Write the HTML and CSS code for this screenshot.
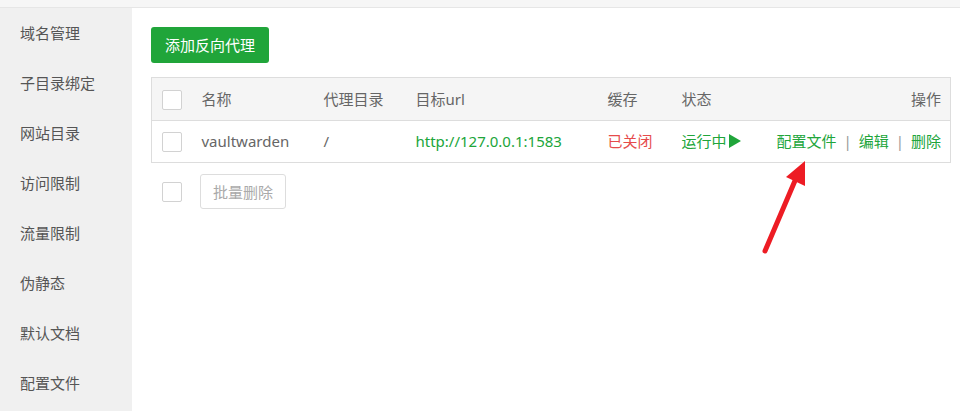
FILE: index.html
```html
<!DOCTYPE html>
<html lang="zh-CN">
<head>
<meta charset="utf-8">
<title>反向代理</title>
<link rel="stylesheet" href="styles.css">
</head>
<body>
<div class="topbar"></div>
<div class="layout">
  <aside class="sidebar">
    <div class="side-item">域名管理</div>
    <div class="side-item">子目录绑定</div>
    <div class="side-item">网站目录</div>
    <div class="side-item">访问限制</div>
    <div class="side-item">流量限制</div>
    <div class="side-item">伪静态</div>
    <div class="side-item">默认文档</div>
    <div class="side-item">配置文件</div>
  </aside>
  <main class="main">
    <button class="btn-add">添加反向代理</button>
    <table class="proxy-table">
      <thead>
        <tr>
          <th class="c-cb"><span class="cb"></span></th>
          <th class="c-name">名称</th>
          <th class="c-dir">代理目录</th>
          <th class="c-url">目标url</th>
          <th class="c-cache">缓存</th>
          <th class="c-status">状态</th>
          <th class="c-ops">操作</th>
        </tr>
      </thead>
      <tbody>
        <tr>
          <td class="c-cb"><span class="cb"></span></td>
          <td class="c-name">vaultwarden</td>
          <td class="c-dir">/</td>
          <td class="c-url green">http://127.0.0.1:1583</td>
          <td class="c-cache red">已关闭</td>
          <td class="c-status green">运行中<svg class="play" width="12" height="14" viewBox="0 0 12 14"><polygon points="0,0 12,7 0,14" fill="#20a53a"/></svg></td>
          <td class="c-ops"><a class="link">配置文件</a><span class="sep">|</span><a class="link">编辑</a><span class="sep">|</span><a class="link">删除</a></td>
        </tr>
      </tbody>
    </table>
    <div class="batch">
      <span class="cb"></span>
      <button class="btn-batch">批量删除</button>
    </div>
  </main>
</div>
<svg class="annot-arrow" width="960" height="411" viewBox="0 0 960 411">
  <line x1="765" y1="251" x2="797" y2="176" stroke="#ed1c24" stroke-width="5" stroke-linecap="round"/>
  <polygon points="805,161 786,177 805,186" fill="#ed1c24"/>
</svg>
</body>
</html>
```
FILE: styles.css
```css
html, body {
  margin: 0;
  padding: 0;
  background: #fff;
}
body {
  width: 960px;
  height: 411px;
  overflow: hidden;
  position: relative;
  font-family: "Noto Sans", "Noto Sans CJK SC", sans-serif;
  font-size: 15px;
  color: #666;
}
.topbar {
  height: 7px;
  background: #f6f6f6;
  border-bottom: 1px solid #e6e6e6;
}
.layout {
  display: flex;
  height: 403px;
}
.sidebar {
  width: 132px;
  flex: none;
  background: #f0f0f0;
}
.side-item {
  height: 50px;
  line-height: 50px;
  padding-left: 20px;
  color: #555;
}
.main {
  flex: 1;
  padding: 19px 10px 0 19px;
}
.btn-add {
  display: block;
  height: 36px;
  padding: 0 14px;
  border: none;
  border-radius: 3px;
  background: #20a53a;
  color: #fff;
  font-family: inherit;
  font-size: 15px;
  line-height: 36px;
}
.proxy-table {
  margin-top: 14px;
  width: 800px;
  border-collapse: collapse;
  table-layout: fixed;
  border: 1px solid #ddd;
}
.proxy-table th,
.proxy-table td {
  height: 40px;
  padding: 0 0 2px 0;
  text-align: left;
  font-weight: normal;
  vertical-align: middle;
  white-space: nowrap;
}
.proxy-table td {
  height: 39px;
}
.proxy-table thead tr {
  background: #f5f5f5;
  border-bottom: 1px solid #ddd;
}
.proxy-table th {
  color: #666;
}
.proxy-table .c-cb { width: 50px; padding-left: 10px; padding-bottom: 0; box-sizing: border-box; }
.c-name { width: 122px; }
.c-dir { width: 92px; }
.c-url { width: 192px; }
.c-cache { width: 74px; }
.c-status { width: 90px; }
.proxy-table .c-ops { text-align: right; padding-right: 9px; }
.cb {
  display: inline-block;
  width: 18px;
  height: 18px;
  border: 1px solid #d2d2d2;
  border-radius: 2px;
  background: #fff;
  vertical-align: middle;
}
.green { color: #20a53a; }
.red { color: #e64b4b; }
.play {
  vertical-align: -1px;
  margin-left: 2px;
}
.link { color: #20a53a; }
.sep {
  color: #999;
  margin: 0 7px;
}
.batch {
  display: flex;
  align-items: center;
  margin-top: 11px;
  padding-left: 11px;
}
.btn-batch {
  margin-left: 18px;
  height: 35px;
  padding: 0 12px;
  border: 1px solid #ddd;
  border-radius: 3px;
  background: #fff;
  color: #aaa;
  font-family: inherit;
  font-size: 15px;
}
.annot-arrow {
  position: absolute;
  left: 0;
  top: 0;
  pointer-events: none;
}
```
